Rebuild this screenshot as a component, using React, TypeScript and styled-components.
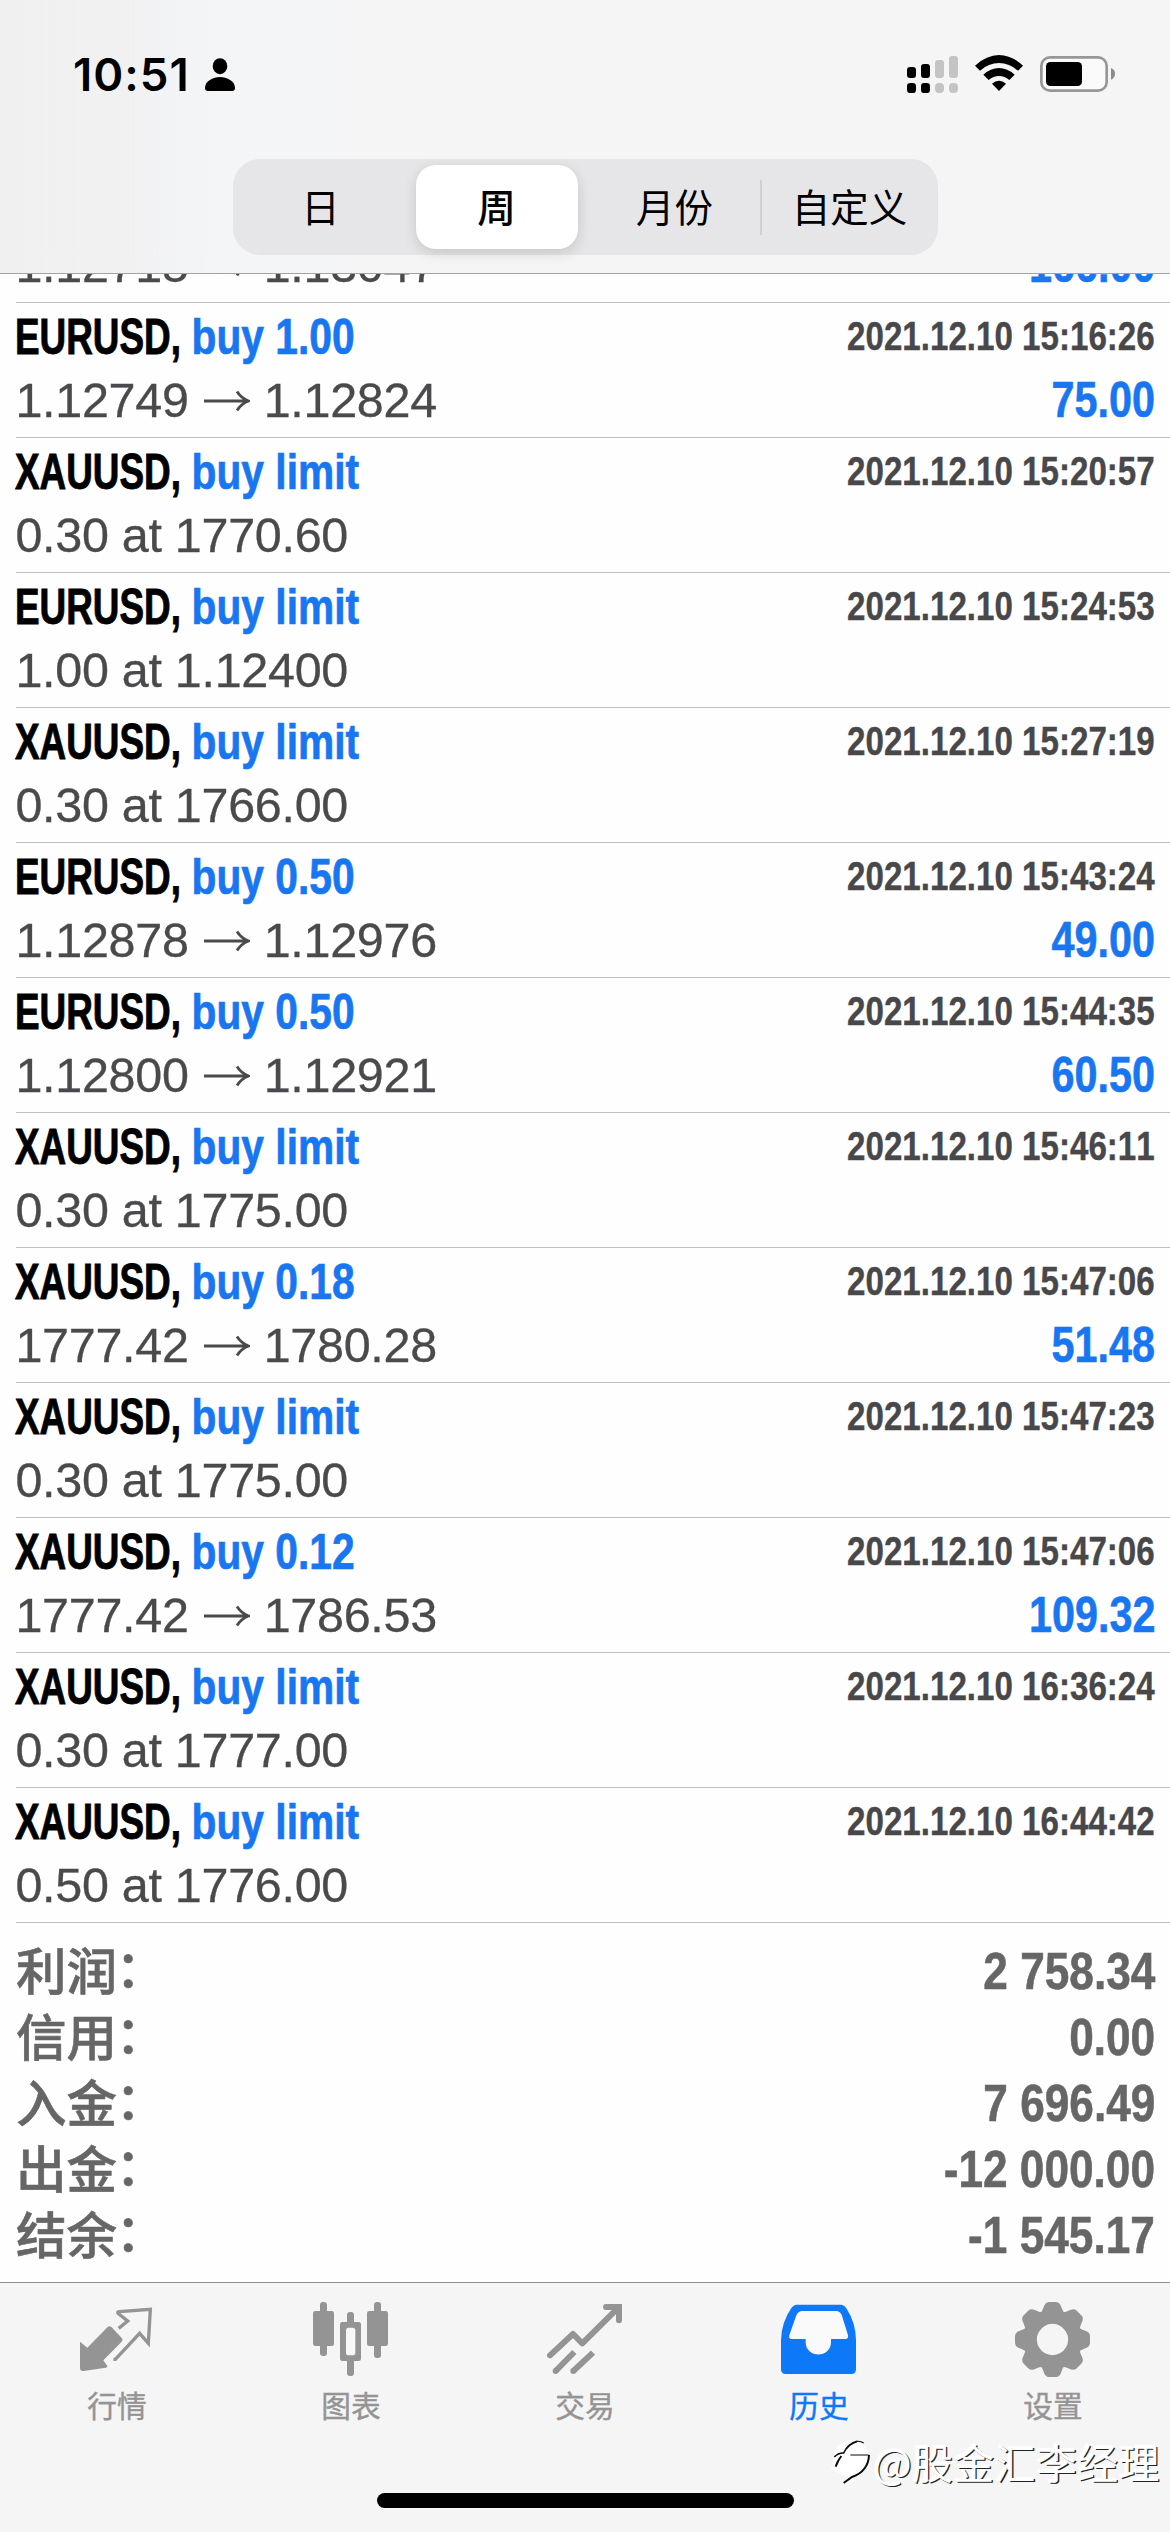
import React from "react";
import styled, { createGlobalStyle } from "styled-components";

const SANS = `"Liberation Sans", Arial, "Noto Sans CJK SC", sans-serif`;
const CJK = `"Noto Sans CJK SC", sans-serif`;

const GlobalStyle = createGlobalStyle`
  html, body { margin: 0; padding: 0; background: #fff; }
  * { box-sizing: border-box; }
`;

const Screen = styled.div`
  width: 1170px;
  height: 2532px;
  display: flex;
  flex-direction: column;
  overflow: hidden;
  background: #fefefe;
  font-family: ${SANS};
  font-kerning: none;
`;

const Header = styled.header`
  flex: none;
  height: 274px;
  border-bottom: 1px solid #a2a2a4;
  background: linear-gradient(90deg, #f0f0f0 0, #f1f1f2 120px, #f4f5f7 220px, #f5f5f5 480px, #f5f5f6 100%);
  display: flex;
  flex-direction: column;
  align-items: center;
`;

const StatusBar = styled.div`
  width: 100%;
  height: 159px;
  padding: 50px 50px 0 73px;
  display: flex;
  justify-content: space-between;
  align-items: flex-start;
`;

const Clock = styled.div`
  display: flex;
  align-items: center;
  gap: 15px;
  height: 50px;
  font: 600 45.5px/50px Inter, sans-serif;
  font-kerning: auto;
  letter-spacing: 1px;
  color: #000;
`;

const Segments = styled.div`
  width: 705px;
  height: 96px;
  padding: 6px;
  border-radius: 27px;
  background: #e6e6e8;
  display: grid;
  grid-template-columns: 177px 162px 184px 1fr;
  align-items: center;
`;

const Segment = styled.button<{ $active?: boolean; $divided?: boolean; $pad?: string }>`
  height: ${(p) => (p.$active ? 84 : 55)}px;
  padding: ${(p) => p.$pad ?? "0 0 5px"};
  border: 0;
  border-right: ${(p) => (p.$divided ? "2px solid #d0d0d3" : "0")};
  border-radius: ${(p) => (p.$active ? 20 : 0)}px;
  background: ${(p) => (p.$active ? "#fff" : "transparent")};
  box-shadow: ${(p) => (p.$active ? "0 4px 14px rgba(0,0,0,.14)" : "none")};
  font: ${(p) => (p.$active ? 500 : 400)} 38.5px/50px ${CJK};
  color: #000;
`;

const List = styled.main`
  flex: none;
  height: 1649px;
  overflow: hidden;
  display: flex;
  flex-direction: column;
  justify-content: flex-end;
  padding-left: 16px;
`;

const Row = styled.article`
  flex: none;
  padding: 5px 15px 8px 0;
  border-bottom: 1px solid #bfbfc1;
`;

const Line = styled.div`
  height: 58px;
  display: flex;
  justify-content: space-between;
  white-space: pre;

  & + & {
    margin-top: 5px;
  }
`;

const Title = styled.h2`
  margin: 0 0 0 -1px;
  font: 700 49.5px/58px ${SANS};
  font-kerning: none;
  color: #000;
  transform: scaleX(0.745);
  transform-origin: left center;
  -webkit-text-stroke: 0.9px currentColor;
`;

const Action = styled.span`
  display: inline-block;
  color: #1877f0;
  transform: scaleX(1.105);
  transform-origin: left center;
  -webkit-text-stroke: 0.7px currentColor;
`;

const Time = styled.time`
  font: 700 41px/56px ${SANS};
  font-kerning: none;
  color: #48484a;
  transform: scaleX(0.808);
  transform-origin: right center;
  -webkit-text-stroke: 0.4px currentColor;
`;

const Prices = styled.div`
  display: flex;
  align-items: center;
  margin-left: -0.6px;
  font: 400 48.5px/58px ${SANS};
  font-kerning: none;
  letter-spacing: -0.3px;
  color: #4a4a4c;
  -webkit-text-stroke: 0.3px currentColor;
`;

const ArrowSvg = styled.svg`
  flex: none;
  margin: 2px 14px 0 14px;
`;

const Profit = styled.div`
  font: 700 49.5px/58px ${SANS};
  color: #1877f0;
  transform: scaleX(0.835);
  transform-origin: right center;
  -webkit-text-stroke: 0.6px currentColor;
`;

const Summary = styled.section`
  flex: none;
  height: 359px;
  padding: 15px 15px 0 16px;
`;

const SummaryRow = styled.div`
  height: 66px;
  display: flex;
  justify-content: space-between;
  align-items: flex-start;
  color: #666;
`;

const SummaryLabel = styled.div`
  font: 500 50.5px/60px ${CJK};
  -webkit-text-stroke: 0.6px currentColor;
`;

const Colon = styled.span`
  margin-left: -14px;
  font-family: "Noto Sans CJK TC", sans-serif;
`;

const SummaryValue = styled.div`
  font: 700 52.5px/66px ${SANS};
  transform: scaleX(0.842);
  transform-origin: right center;
  -webkit-text-stroke: 0.6px currentColor;
`;

const TabBar = styled.footer`
  position: relative;
  flex: none;
  height: 250px;
  border-top: 1px solid #8e8e90;
  background: #f5f5f5;
  display: flex;
  flex-direction: column;
  align-items: center;
`;

const Tabs = styled.nav`
  width: 100%;
  height: 210px;
  padding-top: 17px;
  display: grid;
  grid-template-columns: repeat(5, 1fr);
`;

const Tab = styled.div<{ $color: string }>`
  display: flex;
  flex-direction: column;
  align-items: center;
  color: ${(p) => p.$color};
`;

const TabLabel = styled.span`
  margin-top: 3px;
  font: 400 29.7px/44px ${CJK};
  -webkit-text-stroke: 0.4px currentColor;
`;

const HomeIndicator = styled.div`
  width: 417px;
  height: 15px;
  border-radius: 8px;
  background: #000;
`;

const Watermark = styled.div`
  position: absolute;
  right: 10px;
  bottom: 40px;
  display: flex;
  align-items: center;
  font: 400 40.7px/60px ${CJK};
  letter-spacing: 0.6px;
  color: #fff;
  text-shadow: 1.3px 1.3px 0 #222, -1px -1px 1px #fff;
`;

const Icon = ({ box, children }: { box: string; children: React.ReactNode }) => (
  <svg width="80" height="80" viewBox={box} fill="currentColor">
    {children}
  </svg>
);

const QuotesIcon = () => (
  <Icon box="51 30 240 240">
    <path d="M60 155 82 173 143 111Q149 106 155 112L186 145Q190 150 185 155L130 211 142 228Q144 232 138 233L70 243Q60 244 60 234Z" />
    <path
      d="M176 115 203 93 175 71Q170 65 178 65L271 58 265 160 239 130 166 208H160"
      fill="none"
      stroke="currentColor"
      strokeWidth="10"
    />
  </Icon>
);

const ChartIcon = () => (
  <Icon box="753 30 240 240">
    <rect x="780" y="36" width="21" height="162" rx="9" />
    <rect x="759" y="63" width="63" height="105" rx="7" />
    <rect x="942" y="36" width="21" height="168" rx="9" />
    <rect x="921" y="63" width="63" height="105" rx="7" />
    <rect x="861" y="66" width="21" height="192" rx="9" />
    <rect x="840" y="96" width="63" height="117" rx="7" />
    <rect x="858" y="113" width="28" height="83" rx="8" fill="#f7f7f7" />
  </Icon>
);

const TradeIcon = () => (
  <Icon box="45 30 240 240">
    <g fill="none" stroke="currentColor" strokeWidth="18" strokeLinejoin="round" strokeLinecap="round">
      <path d="M60 196 129 132 157 160 262 56" />
      <path d="M228 51H267V91" strokeLinejoin="miter" />
    </g>
    <g fill="none" stroke="currentColor" strokeWidth="18">
      <path d="M77 243 133 186M130 243 189 188" />
      <path d="M77 243v.1M130 243v.1" strokeLinecap="round" />
    </g>
  </Icon>
);

const HistoryIcon = () => (
  <Icon box="747 30 240 240">
    <path d="M797 44H935Q944 46 950 56 977 98 978 150V238Q978 252 964 252H767Q753 252 753 238V150Q754 98 784 54 789 46 797 44Z" />
    <path
      d="M815 63H918Q930 64 935 74L954 136Q956 147 946 147H903V156C903 206 827 206 827 156V147H785Q775 147 778 136L799 76Q803 65 815 63Z"
      fill="#fafafa"
    />
  </Icon>
);

const TEETH = [0, 45, 90, 135, 180, 225, 270, 315];

const SettingsIcon = () => (
  <Icon box="579 30 240 240">
    {TEETH.map((angle) => (
      <path
        key={angle}
        transform={`rotate(${angle} 697.5 148.5)`}
        d="M658 72Q666 66 670 54 675 36 687 36H708Q720 36 725 54 729 66 737 72V90H658Z"
      />
    ))}
    <path
      fillRule="evenodd"
      d="M697.5 65a83.500 83.500 0 1 0 .01 0ZM697.500 101.500a47 47 0 1 1-.01 0Z"
    />
  </Icon>
);

const PersonIcon = () => (
  <svg width="30" height="34" viewBox="0 0 30 34">
    <ellipse cx="15" cy="8.200" rx="7.300" ry="8" />
    <path d="M0 30C0 23 8 19 15 19s15 4 15 11q0 3-3 3H3q-3 0-3-3Z" />
  </svg>
);

const StatusIcons = () => (
  <svg width="220" height="46" viewBox="60 30 660 138">
    <rect x="81" y="81" width="27" height="33" rx="9" />
    <rect x="123" y="72" width="27" height="42" rx="9" />
    <rect x="165" y="60" width="27" height="54" rx="9" fill="#c4c4c4" />
    <rect x="207" y="48" width="27" height="66" rx="9" fill="#c4c4c4" />
    <rect x="81" y="129" width="27" height="30" rx="10" />
    <rect x="123" y="129" width="27" height="30" rx="10" />
    <rect x="165" y="129" width="27" height="30" rx="12" fill="#c4c4c4" />
    <rect x="207" y="129" width="27" height="30" rx="12" fill="#c4c4c4" />
    <path d="M285 77Q320 45 357 45T429 77L414 92Q388 69 357 69T300 92Z" />
    <path d="M310 104Q332 84 357 84T404 104L388 120Q374 108 357 108T326 120Z" />
    <path d="M336 131Q346 122 357 122T378 131L357 153Z" />
    <rect x="484" y="52" width="196" height="100" rx="26" fill="#fafafa" stroke="#979797" strokeWidth="8" />
    <rect x="498" y="66" width="108" height="72" rx="13" />
    <path d="M693 84Q705 89 705 101T693 119Z" fill="#8c8c8c" />
  </svg>
);

const Arrow = () => (
  <ArrowSvg width="47" height="22" viewBox="0 0 47 22" fill="none" stroke="#4a4a4c" strokeWidth="2.800">
    <path d="M1 11H45M34 1.500Q38 8 45.500 11 38 14 34 20.500" />
  </ArrowSvg>
);

const WatermarkLogo = () => (
  <svg width="42" height="48" viewBox="0 0 126 144" overflow="visible">
    <circle cx="60" cy="62" r="55" fill="#fff" />
    <path d="M10 57 0 92 14 100 60 120 34 140 72 128Z" fill="#fff" />
    <g fill="none" stroke="#0a0a0a">
      <path d="M10 57Q22 44 38 45 50 18 78 10" strokeWidth="5" />
      <path d="M78 10Q90 9 98 15M58 51H113" strokeWidth="3.5" />
      <path d="M31 54Q20 68 14 86M114 51Q112 100 63 117L38 135" strokeWidth="6" />
    </g>
  </svg>
);

type Deal = {
  symbol?: string;
  action?: string;
  time?: string;
  open: string;
  close?: string;
  profit?: string;
};

const order = (symbol: string, open: string, clock: string): Deal => ({
  symbol,
  action: "buy limit",
  time: `2021.12.10 ${clock}`,
  open,
});

const trade = (
  symbol: string,
  volume: string,
  open: string,
  close: string,
  clock: string,
  profit: string
): Deal => ({ symbol, action: `buy ${volume}`, time: `2021.12.10 ${clock}`, open, close, profit });

// The first entry is scrolled mostly under the header, so only its price line is listed.
const DEALS: Deal[] = [
  { open: "1.12715", close: "1.13047", profit: "166.00" },
  trade("EURUSD", "1.00", "1.12749", "1.12824", "15:16:26", "75.00"),
  order("XAUUSD", "0.30 at 1770.60", "15:20:57"),
  order("EURUSD", "1.00 at 1.12400", "15:24:53"),
  order("XAUUSD", "0.30 at 1766.00", "15:27:19"),
  trade("EURUSD", "0.50", "1.12878", "1.12976", "15:43:24", "49.00"),
  trade("EURUSD", "0.50", "1.12800", "1.12921", "15:44:35", "60.50"),
  order("XAUUSD", "0.30 at 1775.00", "15:46:11"),
  trade("XAUUSD", "0.18", "1777.42", "1780.28", "15:47:06", "51.48"),
  order("XAUUSD", "0.30 at 1775.00", "15:47:23"),
  trade("XAUUSD", "0.12", "1777.42", "1786.53", "15:47:06", "109.32"),
  order("XAUUSD", "0.30 at 1777.00", "16:36:24"),
  order("XAUUSD", "0.50 at 1776.00", "16:44:42"),
];

const TOTALS = [
  ["利润", "2 758.34"],
  ["信用", "0.00"],
  ["入金", "7 696.49"],
  ["出金", "-12 000.00"],
  ["结余", "-1 545.17"],
];

const TABS = [
  { label: "行情", icon: <QuotesIcon />, color: "#949494" },
  { label: "图表", icon: <ChartIcon />, color: "#949494" },
  { label: "交易", icon: <TradeIcon />, color: "#949494" },
  { label: "历史", icon: <HistoryIcon />, color: "#0d78f8" },
  { label: "设置", icon: <SettingsIcon />, color: "#949494" },
];

export default function App() {
  return (
    <Screen>
      <GlobalStyle />
      <Header>
        <StatusBar>
          <Clock>
            10:51
            <PersonIcon />
          </Clock>
          <StatusIcons />
        </StatusBar>
        <Segments>
          <Segment $pad="0 13px 5px 0">日</Segment>
          <Segment $active>周</Segment>
          <Segment $divided $pad="0 0 5px 12px">
            月份
          </Segment>
          <Segment $pad="0 0 5px 6px">自定义</Segment>
        </Segments>
      </Header>
      <List>
        {DEALS.map((deal, i) => (
          <Row key={i}>
            {deal.symbol && (
              <Line>
                <Title>
                  {deal.symbol}, <Action>{deal.action}</Action>
                </Title>
                <Time>{deal.time}</Time>
              </Line>
            )}
            <Line>
              <Prices>
                {deal.open}
                {deal.close && <Arrow />}
                {deal.close}
              </Prices>
              {deal.profit && <Profit>{deal.profit}</Profit>}
            </Line>
          </Row>
        ))}
      </List>
      <Summary>
        {TOTALS.map(([label, value]) => (
          <SummaryRow key={label}>
            <SummaryLabel>
              {label}
              <Colon lang="zh-TW">：</Colon>
            </SummaryLabel>
            <SummaryValue>{value}</SummaryValue>
          </SummaryRow>
        ))}
      </Summary>
      <TabBar>
        <Tabs>
          {TABS.map((tab) => (
            <Tab key={tab.label} $color={tab.color}>
              {tab.icon}
              <TabLabel>{tab.label}</TabLabel>
            </Tab>
          ))}
        </Tabs>
        <HomeIndicator />
        <Watermark>
          <WatermarkLogo />
          @股金汇李经理
        </Watermark>
      </TabBar>
    </Screen>
  );
}
